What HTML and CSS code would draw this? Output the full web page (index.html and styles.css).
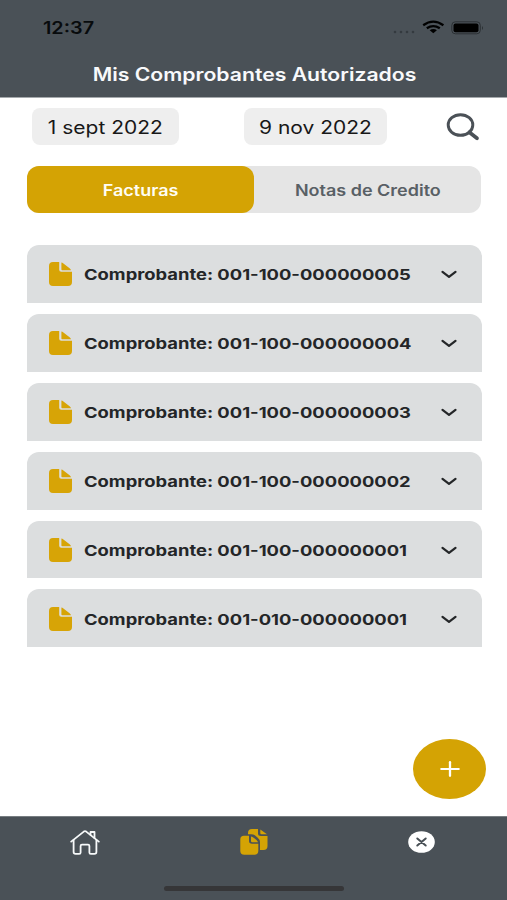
FILE: index.html
```
<!DOCTYPE html>
<html lang="es">
<head>
<meta charset="utf-8">
<title>Mis Comprobantes Autorizados</title>
<link rel="stylesheet" href="styles.css">
</head>
<body>
<svg width="0" height="0" class="defs">
  <symbol id="doc" viewBox="0 0 23 24">
    <path d="M4 0H10.2V7.8Q10.2 9.8 12.2 9.8H23V20Q23 24 19 24H4Q0 24 0 20V4Q0 0 4 0Z"/>
    <path d="M12.4 .6Q13.4 .8 14.4 1.6L20.6 6.2Q21.8 7.2 22 8.3H13.2Q12.4 8.3 12.4 7.5Z"/>
  </symbol>
  <symbol id="chevron" viewBox="0 0 16 9">
    <path d="M1.5 1.8 8 6.8 14.5 1.8" fill="none" stroke="currentColor" stroke-width="2.2" stroke-linecap="round" stroke-linejoin="round"/>
  </symbol>
</svg>
<div class="app">
  <header class="header">
    <div class="status">
      <span class="wide time">12:37</span>
      <svg class="signals" width="92" height="18" viewBox="0 0 92 18">
        <g fill="#343a3f"><circle cx="4" cy="13" r="1.3"/><circle cx="10" cy="13" r="1.3"/><circle cx="16" cy="13" r="1.3"/><circle cx="22" cy="13" r="1.3"/></g>
        <g fill="none" stroke="#000" stroke-width="2.3"><path d="M32.2 6.2Q42.3-1 52.4 6.2"/><path d="M35.8 9.3Q42.3 4.8 48.8 9.3"/></g>
        <path d="M38.7 11.3Q42.3 8.8 45.9 11.3L42.3 14.3Z"/>
        <rect x="60.8" y="2.8" width="28.5" height="12" rx="3.5" fill="none" stroke="#2b3034"/>
        <rect x="62.5" y="4.4" width="25" height="8.8" rx="2"/>
        <path d="M91 7Q93 9 91 11Z" fill="#2b3034"/>
      </svg>
    </div>
    <h1 class="title"><span class="wide">Mis Comprobantes Autorizados</span></h1>
  </header>
  <main class="content">
    <div class="filters">
      <button class="date from"><span class="wide">1 sept 2022</span></button>
      <button class="date to"><span class="wide">9 nov 2022</span></button>
      <svg class="search" width="34" height="28" viewBox="0 0 34 28" fill="none" stroke="#4b5157"><ellipse cx="14.5" cy="12" rx="12.3" ry="10.3" stroke-width="2.9"/><path d="M23.3 19.3 31 25.3" stroke-width="3.7" stroke-linecap="round"/></svg>
    </div>
    <div class="tabs">
      <button class="tab active"><span class="wide">Facturas</span></button>
      <button class="tab"><span class="wide">Notas de Credito</span></button>
    </div>
    <ul class="list">
      <li class="card"><svg class="doc"><use href="#doc"/></svg><span class="wide">Comprobante: 001-100-000000005</span><svg class="chevron"><use href="#chevron"/></svg></li>
      <li class="card"><svg class="doc"><use href="#doc"/></svg><span class="wide">Comprobante: 001-100-000000004</span><svg class="chevron"><use href="#chevron"/></svg></li>
      <li class="card"><svg class="doc"><use href="#doc"/></svg><span class="wide">Comprobante: 001-100-000000003</span><svg class="chevron"><use href="#chevron"/></svg></li>
      <li class="card"><svg class="doc"><use href="#doc"/></svg><span class="wide">Comprobante: 001-100-000000002</span><svg class="chevron"><use href="#chevron"/></svg></li>
      <li class="card"><svg class="doc"><use href="#doc"/></svg><span class="wide">Comprobante: 001-100-000000001</span><svg class="chevron"><use href="#chevron"/></svg></li>
      <li class="card"><svg class="doc"><use href="#doc"/></svg><span class="wide">Comprobante: 001-010-000000001</span><svg class="chevron"><use href="#chevron"/></svg></li>
    </ul>
    <button class="add" aria-label="Agregar"><svg width="20" height="16" viewBox="0 0 20 16" stroke="#fff" stroke-linecap="round"><path d="M1.2 8H18.8" stroke-width="2"/><path d="M10 1.2V14.8" stroke-width="2.3"/></svg></button>
  </main>
  <nav class="nav">
    <div class="nav-item">
      <svg width="30" height="25" viewBox="0 0 30 25" fill="none" stroke="#f7f9fa" stroke-width="1.8" stroke-linejoin="round" stroke-linecap="round"><path d="M1.2 11.6 13.8 1.6Q15 .8 16.2 1.6L28.8 11.6"/><path d="M3.6 10V22Q3.6 23.8 5.6 23.8H9.2Q10.6 23.8 10.6 22.4V16Q10.6 14.6 12 14.6H18Q19.4 14.6 19.4 16V22.4Q19.4 23.8 20.8 23.8H24.4Q26.4 23.8 26.4 22V10"/><path d="M20.5 4.8V2H24.5V8"/></svg>
    </div>
    <div class="nav-item">
      <svg width="28" height="26" viewBox="0 0 28 26"><g fill="#d4a304"><path d="M8 4Q8 0 12 0H18V4.5Q18 7 21 7H27.5V17Q27.5 21 23.5 21H20V13Q20 10.5 17.5 8.4L14.8 6.2Q13.5 5.2 11 5.2H8Z"/><path d="M20.3.5 27 5.3H21.5Q20.3 5.3 20.3 4.2Z"/><path d="M4 6.8H9V12Q9 14.8 12 14.8H18.3V22Q18.3 25.7 14.3 25.7H4.3Q.3 25.7.3 22V10.5Q.3 6.8 4 6.8Z"/><path d="M11 7.5Q12.5 7.7 14 9L16.5 11Q17.8 12.2 18 13.2H12.2Q11 13.2 11 12Z"/></g></svg>
    </div>
    <div class="nav-item">
      <svg width="27" height="22" viewBox="0 0 27 22"><ellipse cx="13.5" cy="11" rx="13.3" ry="10.8" fill="#fff"/><path d="M9.3 7.5 17.7 14.5M17.7 7.5 9.3 14.5" fill="none" stroke="#484f55" stroke-width="2" stroke-linecap="round"/></svg>
    </div>
    <div class="home-bar"></div>
  </nav>
</div>
</body>
</html>
```
FILE: styles.css
```
* { box-sizing: border-box; }
body { margin: 0; background: #fff; font-family: Inter, "Liberation Sans", sans-serif; }
button { border: 0; padding: 0; margin: 0; font: inherit; color: inherit; }
svg { display: block; flex: none; }
.defs { position: absolute; }
.app { width: 507px; height: 900px; display: flex; flex-direction: column; }
.wide { display: inline-block; white-space: nowrap; transform: scaleX(1.2); }

.header { height: 98px; background: #4a5157; border-bottom: 1px solid #a5a9ac; }
.status { height: 55px; padding: 0 24px 0 43px; display: flex; align-items: center; justify-content: space-between; }
.time { font-size: 17px; font-weight: 600; color: #080b0d; transform: scaleX(1.165); transform-origin: left; }
.title { margin: 0; height: 40px; line-height: 40px; text-align: center; font-size: 18px; font-weight: 600; color: #f8f9fb; }
.title .wide { transform: translateX(1px) scaleX(1.177); }

.content { flex: 1; display: flex; flex-direction: column; padding: 10px 21px 17px 27px; }
.filters { height: 37px; display: flex; align-items: center; padding-left: 5px; }
.date { height: 37px; padding-top: 2px; border-radius: 8px; background: #eee; font-size: 18px; color: #181818; }
.date .wide { transform: scaleX(1.165); }
.from { width: 147px; }
.to { width: 143px; margin-left: 65px; }
.search { margin-left: 59px; }

.tabs { width: 454px; height: 47px; margin-top: 21px; display: flex; border-radius: 12px; background: #e5e5e5; }
.tab { width: 227px; padding-top: 1px; border-radius: 12px; background: none; font-size: 15.5px; font-weight: 600; color: #596065; }
.tab .wide { transform: scaleX(1.16); }
.active { background: #d4a304; color: #fffdf4; }

.list { list-style: none; margin: 32px 0 0; padding: 0; width: 455px; display: grid; gap: 11px; }
.card { height: 57.9px; display: flex; align-items: center; padding: 1px 25px 0 22px; background: #dcdedf; border-radius: 12px 12px 0 0; font-size: 15px; font-weight: 700; color: #242628; }
.card .wide { margin-left: 12px; padding-top: 1px; transform: scaleX(1.225); transform-origin: left; }
.doc { width: 23px; height: 24px; fill: #d7a406; }
.chevron { width: 16px; height: 9px; margin: 1px 0 0 auto; }

.add { width: 73px; height: 60px; margin: auto 0 0 auto; border-radius: 50%; background: #d4a304; display: grid; place-items: center; }

.nav { height: 84px; background: #4a5157; border-top: 1px solid #777d81; display: grid; grid-template-columns: repeat(3, 168px); grid-template-rows: 50px auto; justify-content: center; }
.nav-item { display: grid; place-items: center; }
.nav-item:first-child { padding-right: 2px; }
.home-bar { grid-column: 1 / -1; justify-self: center; width: 180px; height: 5px; margin-top: 19px; border-radius: 3px; background: #363638; }
```
